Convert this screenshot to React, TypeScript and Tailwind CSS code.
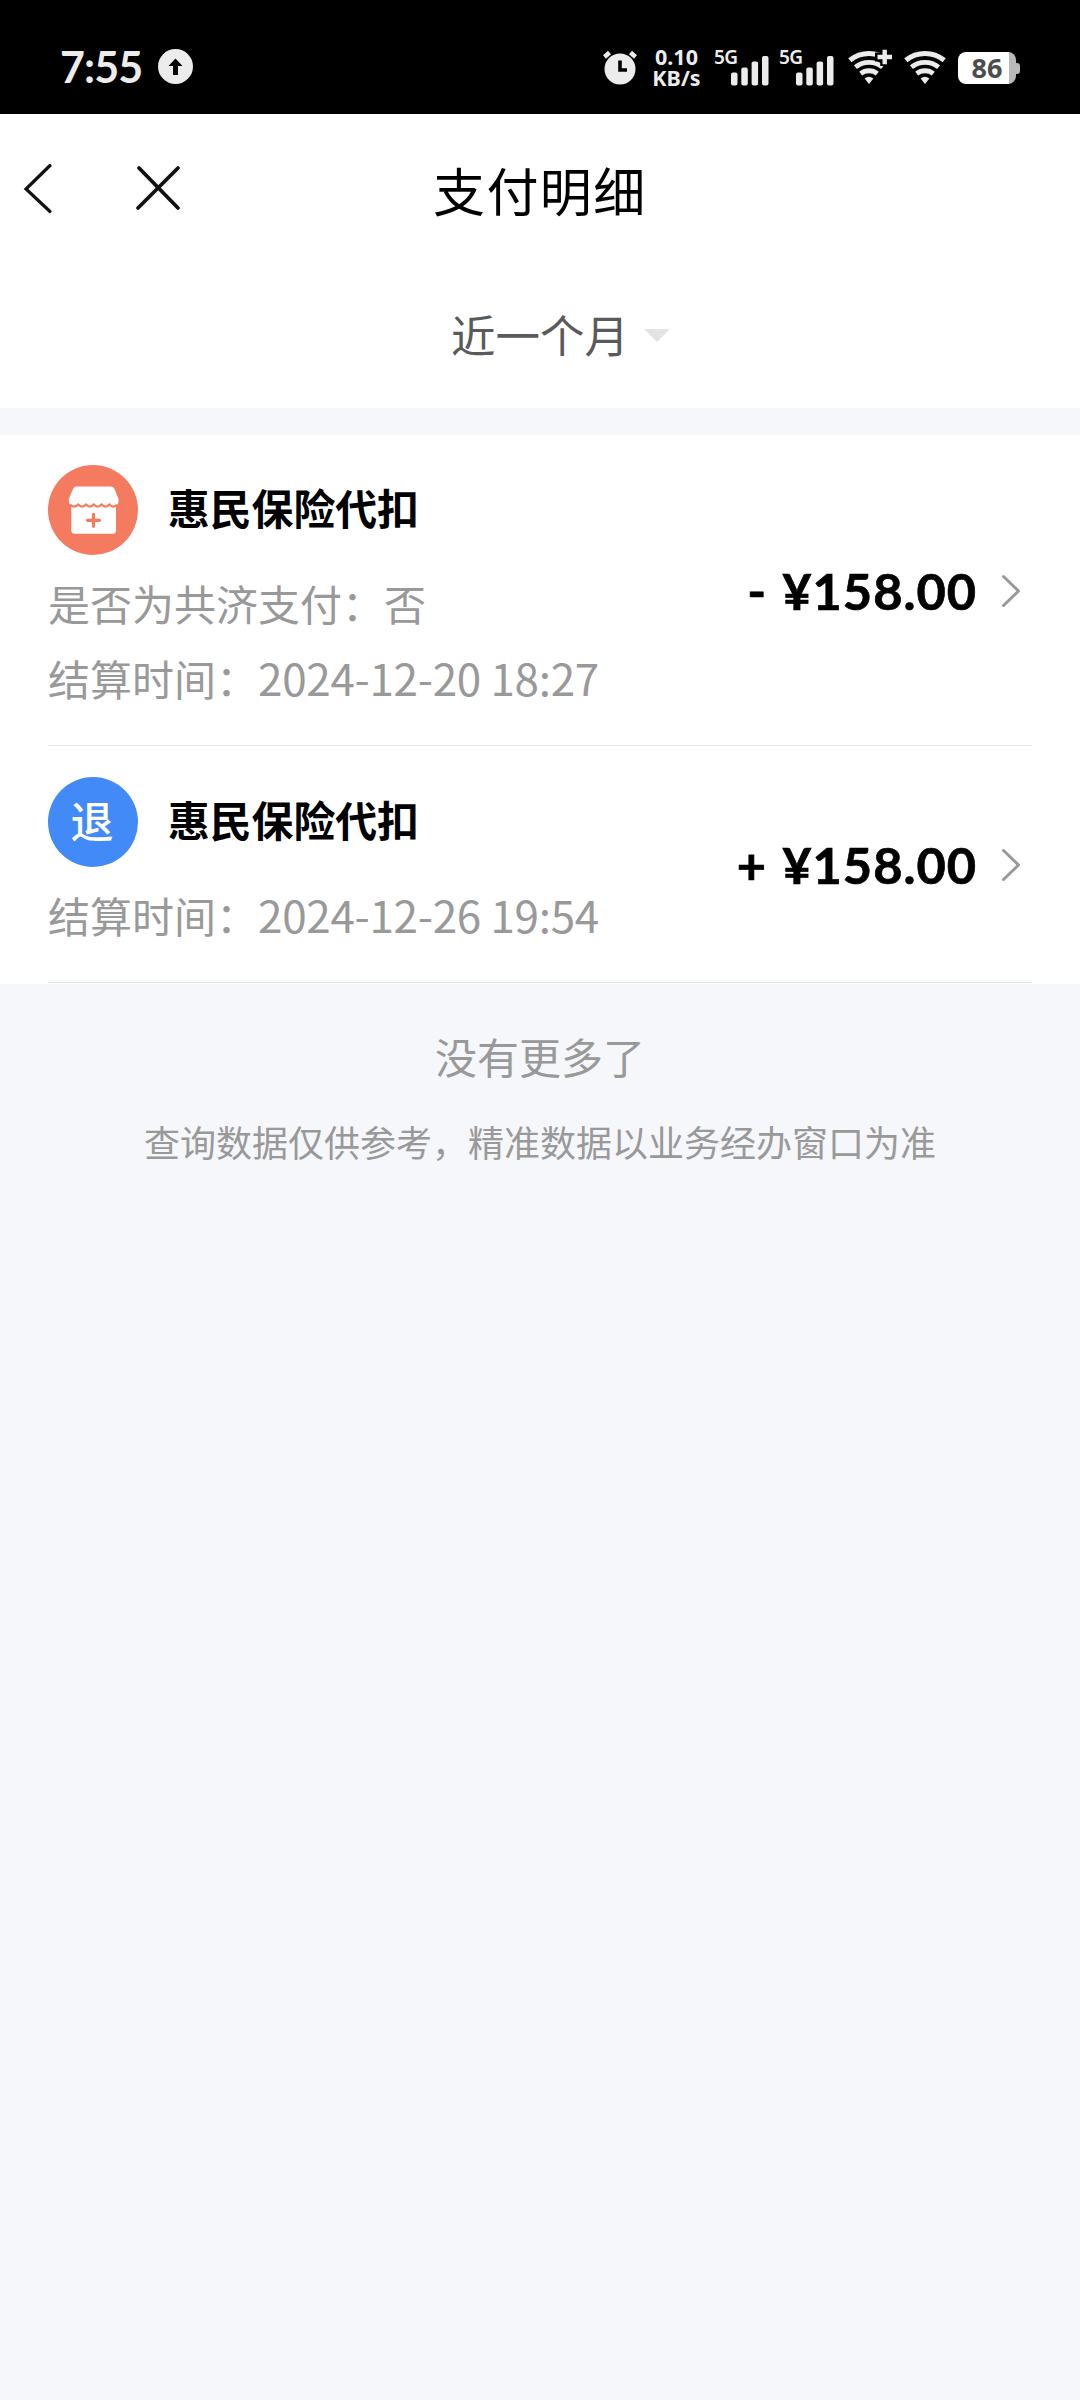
import React from "react";

const cjk = "font-['Noto_Sans_CJK_SC',sans-serif]";

function Signal() {
  return (
    <div className="flex h-[38px] w-[56px] items-start">
      <span className="w-[17px] font-['Noto_Sans',sans-serif] text-[19px] leading-[19px] font-semibold tracking-[-0.6px]">
        5G
      </span>
      <svg className="mt-[8px] h-[30px] w-[38px]" viewBox="0 0 38 30" fill="#ececec">
        <rect x="0" y="16.5" width="6.5" height="13" rx="2" />
        <rect x="10.3" y="11.5" width="6.5" height="18" rx="2" />
        <rect x="20.6" y="5.5" width="6.5" height="24" rx="2" />
        <rect x="31" y="0" width="6.5" height="29.5" rx="2" />
      </svg>
    </div>
  );
}

function Wifi({ plus = false }: { plus?: boolean }) {
  return (
    <svg className="h-[36px] w-[46px]" viewBox="0 0 46 36" fill="none" stroke="#ececec">
      <path d="M1.8 11.3 A30.5 30.5 0 0 1 40.2 11.3" strokeWidth="5" />
      <path d="M7.4 18.1 A21.7 21.7 0 0 1 34.6 18.1" strokeWidth="4.8" />
      <path d="M12.7 24.7 A13.2 13.2 0 0 1 29.3 24.7" strokeWidth="4.8" />
      <path d="M16.6 29.6 A7 7 0 0 1 25.4 29.6 L21 35Z" fill="#ececec" stroke="none" />
      {plus && (
        <>
          <path d="M27 8 H46 M36.7 -2 V17" stroke="#000" strokeWidth="9" />
          <path d="M29.5 8 H44 M36.7 0.8 V15.2" strokeWidth="4.4" />
        </>
      )}
    </svg>
  );
}

function StatusBar() {
  return (
    <header className="flex h-[114px] bg-black text-[#ececec]">
      <div className="flex w-[600px] items-start pl-[60px]">
        <span className="mt-[44px] w-[98px] font-['Lato',sans-serif] text-[43px] leading-[46px] font-bold tracking-[-0.9px]">
          7:55
        </span>
        <svg className="mt-[49px] h-[35px] w-[35px]" viewBox="0 0 35 35">
          <circle cx="17.5" cy="17.5" r="17.5" fill="#ececec" />
          <path d="M17.5 9.5 L24.5 17 H20 V26 H15 V17 H10.5Z" fill="#000" />
        </svg>
      </div>
      <svg className="mt-[50px] h-[36px] w-[38px] shrink-0" viewBox="0 0 38 36">
        <circle cx="20" cy="19" r="15.5" fill="#ececec" />
        <path d="M4.5 7 L9.5 2.5 M30.5 2.5 L35.5 7" stroke="#ececec" strokeWidth="4.5" />
        <path d="M20 10.5 V20 H27" stroke="#000" strokeWidth="3.6" fill="none" />
      </svg>
      <div className="mt-[46px] ml-[12px] flex w-[53px] flex-col items-center font-['Noto_Sans',sans-serif] text-[21.5px] leading-[21px] font-bold">
        <span>0.10</span>
        <span>KB/s</span>
      </div>
      <div className="mt-[48px] ml-[11px] flex gap-[9px]">
        <Signal />
        <Signal />
      </div>
      <div className="mt-[49px] ml-[13px] flex gap-[10px]">
        <Wifi plus />
        <Wifi />
      </div>
      <div className="mt-[52px] ml-[8px] flex h-[32px] items-center">
        <div className="flex h-[32px] w-[58px] items-center justify-center rounded-[8px] bg-[linear-gradient(to_right,#fff_51px,#b9b9b9_51px)] font-['Noto_Sans',sans-serif] text-[27px] leading-[32px] font-bold text-[#4c4c4c]">
          86
        </div>
        <div className="h-[11px] w-[4px] rounded-r-[3px] bg-[#b9b9b9]" />
      </div>
    </header>
  );
}

function StoreIcon() {
  return (
    <svg className="h-[90px] w-[90px]" viewBox="0 0 90 90">
      <circle cx="45" cy="45" r="45" fill="#f47b60" />
      <path
        d="M28 21.5 H63 Q65.5 21.5 66.6 24 L70.5 34 V36 Q70.5 40 68 41 V65.5 Q68 68.7 65 68.7 H26.5 Q23.3 68.7 23.3 65.5 V41 Q20.8 39.5 20.8 36 V34 L25 24 Q26 21.5 28 21.5Z"
        fill="#fff"
      />
      <path
        d="M22 39.6 Q26 43.8 30.2 39.6 Q34.2 43.8 38 39.6 Q42 43.8 45.8 39.6 Q49.8 43.8 53.6 39.6 Q57.6 43.8 61.4 39.6 Q65.4 43.8 69.5 39.6"
        fill="none"
        stroke="#f47b60"
        strokeWidth="2.2"
      />
      <path d="M39.5 55.3 H51.5 M45.5 49.3 V61.3" stroke="#f47b60" strokeWidth="3.2" strokeLinecap="round" />
    </svg>
  );
}

function Amount({ sign }: { sign: string }) {
  return (
    <div className="flex items-center pt-[2px]">
      <span className="font-['Lato',sans-serif] text-[50.5px] leading-[60px] font-bold tracking-[1px] whitespace-pre text-black [-webkit-text-stroke:0.7px_#000] [word-spacing:2px]">
        {sign} ¥158.00
      </span>
      <svg className="mr-[11px] ml-[24px] h-[34px] w-[20px]" viewBox="0 0 20 34" fill="none" stroke="#999" strokeWidth="3" strokeLinecap="round" strokeLinejoin="round">
        <path d="M2.5 2.5 L17.5 17 L2.5 31.5" />
      </svg>
    </div>
  );
}

function TimeLine({ value }: { value: string }) {
  return (
    <div className="flex">
      <span>结算时间：</span>
      <span className="text-[44px] tracking-[-0.3px]">{value}</span>
    </div>
  );
}

const detail = `${cjk} text-[42px] leading-[75px] text-[#999]`;
const heading = "ml-[30px] pb-[6px] text-[41.8px] leading-[60px] font-bold text-black";

export default function App() {
  return (
    <div className={`${cjk} min-h-[2400px] w-[1080px] bg-[#f5f7fb]`} lang="zh-CN">
      <StatusBar />
      <nav className="flex h-[152px] items-center bg-white">
        <svg className="h-[60px] w-[433px]" viewBox="0 0 433 60" fill="none" stroke="#111" strokeWidth="3.2" strokeLinecap="round">
          <path d="M50 5.5 L26 29 L50 51.5" />
          <path d="M139 8 L178 48 M178 8 L138 48" strokeWidth="3.8" />
        </svg>
        <h1 className="text-[52px] leading-[76px] tracking-[1.4px] text-black">支付明细</h1>
      </nav>
      <div className="flex h-[142px] items-center bg-white pb-[7px] pl-[451px]">
        <span className="text-[44.5px] leading-[60px] text-[#5a5a5a]">近一个月</span>
        <svg className="mt-[4px] ml-[15px] h-[13px] w-[26px]" viewBox="0 0 26 13">
          <path d="M0 0 H26 L13 13Z" fill="#e3e3e3" />
        </svg>
      </div>
      <main className="mt-[27px] h-[549px] bg-white px-[48px]">
        <section className="flex h-[311px] justify-between border-b border-[#e6e6e6]">
          <div className="pt-[30px]">
            <div className="flex items-center">
              <StoreIcon />
              <h2 className={heading}>惠民保险代扣</h2>
            </div>
            <div className={`${detail} pt-[10px]`}>
              <div>是否为共济支付：否</div>
              <TimeLine value="2024-12-20 18:27" />
            </div>
          </div>
          <Amount sign="-" />
        </section>
        <section className="flex h-[237px] justify-between border-b border-[#e0e3e8]">
          <div className="pt-[31px]">
            <div className="flex items-center">
              <div className="flex h-[90px] w-[90px] items-center justify-center rounded-full bg-[#428af8] pr-[2px] pb-[6px] text-[43px] leading-[60px] font-medium text-white">
                退
              </div>
              <h2 className={heading}>惠民保险代扣</h2>
            </div>
            <div className={`${detail} pt-[10px]`}>
              <TimeLine value="2024-12-26 19:54" />
            </div>
          </div>
          <Amount sign="+" />
        </section>
      </main>
      <footer className="flex flex-col items-center text-[#999]">
        <p className="mt-[42px] text-[42px] leading-[60px]">没有更多了</p>
        <p className="mt-[30px] text-[36px] leading-[50px]">查询数据仅供参考，精准数据以业务经办窗口为准</p>
      </footer>
    </div>
  );
}
